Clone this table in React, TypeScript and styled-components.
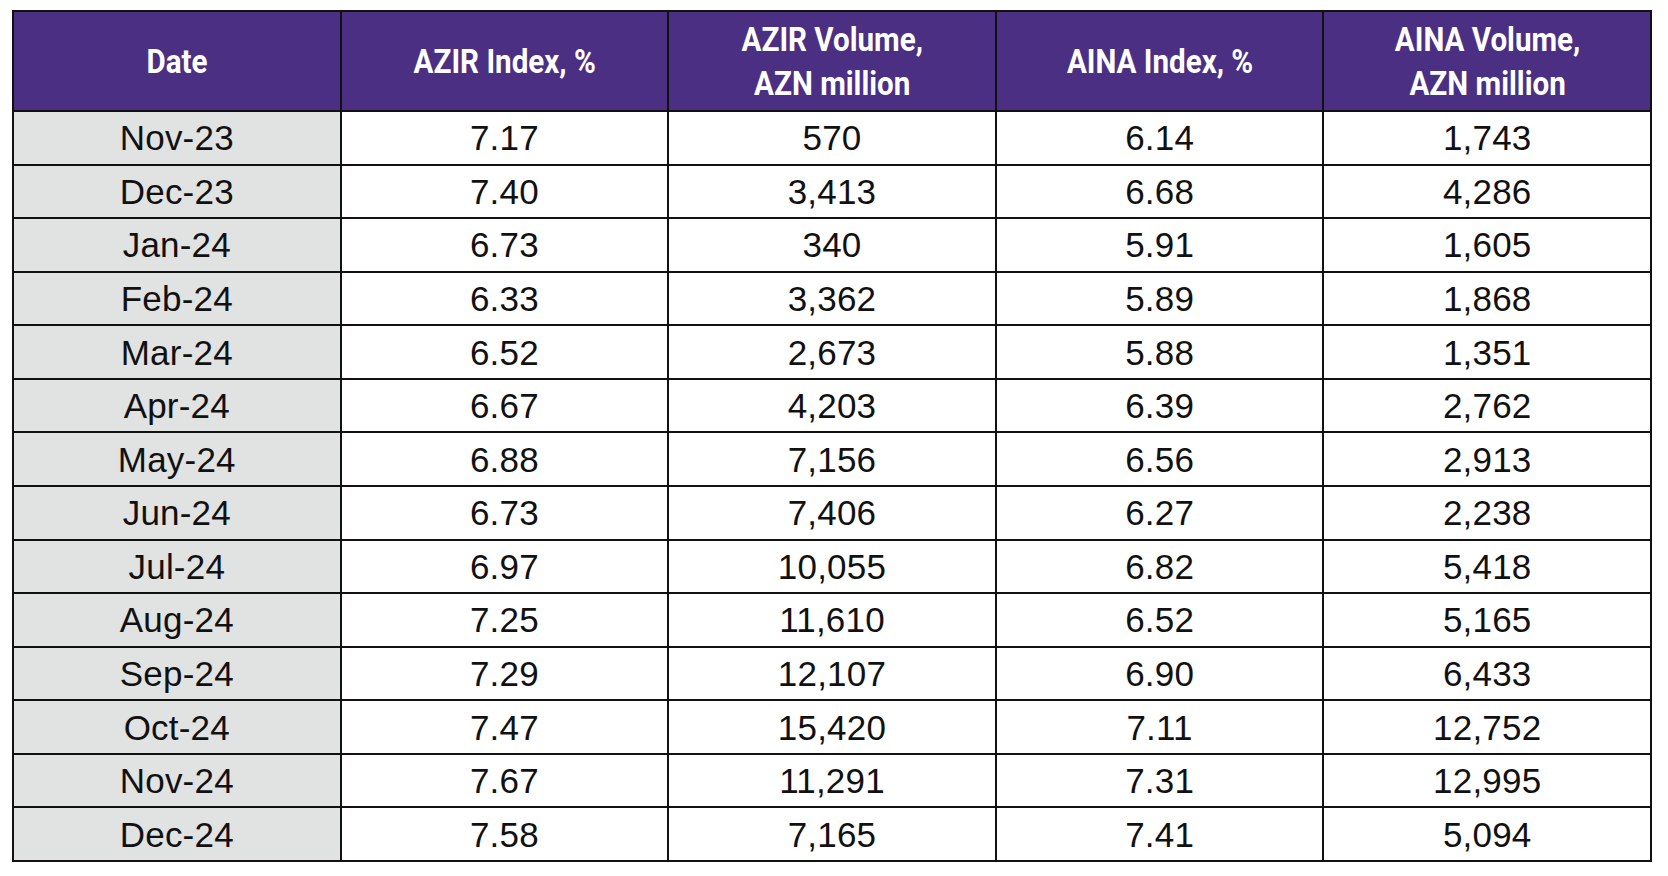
import React from 'react';
import styled, { createGlobalStyle } from 'styled-components';

const headers = ['Date', 'AZIR Index, %', 'AZIR Volume,\nAZN million', 'AINA Index, %', 'AINA Volume,\nAZN million'];

const rows: string[][] = [
  ['Nov-23', '7.17', '570', '6.14', '1,743'],
  ['Dec-23', '7.40', '3,413', '6.68', '4,286'],
  ['Jan-24', '6.73', '340', '5.91', '1,605'],
  ['Feb-24', '6.33', '3,362', '5.89', '1,868'],
  ['Mar-24', '6.52', '2,673', '5.88', '1,351'],
  ['Apr-24', '6.67', '4,203', '6.39', '2,762'],
  ['May-24', '6.88', '7,156', '6.56', '2,913'],
  ['Jun-24', '6.73', '7,406', '6.27', '2,238'],
  ['Jul-24', '6.97', '10,055', '6.82', '5,418'],
  ['Aug-24', '7.25', '11,610', '6.52', '5,165'],
  ['Sep-24', '7.29', '12,107', '6.90', '6,433'],
  ['Oct-24', '7.47', '15,420', '7.11', '12,752'],
  ['Nov-24', '7.67', '11,291', '7.31', '12,995'],
  ['Dec-24', '7.58', '7,165', '7.41', '5,094'],
];

const GlobalStyle = createGlobalStyle`
  body {
    margin: 0;
    background: #ffffff;
  }
`;

const Page = styled.div`
  padding: 10px 0 0 12px;
`;

const Grid = styled.div`
  display: grid;
  grid-template-columns: repeat(5, 1fr);
  grid-template-rows: 98px repeat(14, 1fr);
  gap: 2px;
  padding: 2px;
  width: 1640px;
  height: 852px;
  box-sizing: border-box;
  background: #111111;
`;

const HeadCell = styled.div`
  display: flex;
  align-items: center;
  justify-content: center;
  background: #4a2f83;
`;

// condensed look: no narrow face is installed, so squeeze Roboto
const HeadText = styled.span`
  display: inline-block;
  color: #ffffff;
  font-family: Roboto, 'Liberation Sans', sans-serif;
  font-weight: 700;
  font-size: 34px;
  line-height: 44px;
  text-align: center;
  white-space: pre-line;
  transform: scaleX(0.87);
`;

const Cell = styled.div<{ $shaded?: boolean }>`
  display: flex;
  align-items: center;
  justify-content: center;
  background: ${(p) => (p.$shaded ? '#e1e2e2' : '#ffffff')};
  color: #111111;
  font-family: 'Liberation Sans', Arial, sans-serif;
  font-size: 35px;
  letter-spacing: 0.2px;
  line-height: 1;
`;

const App = () => {
  return (
    <Page>
      <GlobalStyle />
      <Grid>
        {headers.map((h) => (
          <HeadCell key={h}>
            <HeadText>{h}</HeadText>
          </HeadCell>
        ))}
        {rows.map((r) =>
          r.map((v, i) => (
            <Cell key={r[0] + i} $shaded={i === 0}>
              {v}
            </Cell>
          ))
        )}
      </Grid>
    </Page>
  );
};

export default App;
